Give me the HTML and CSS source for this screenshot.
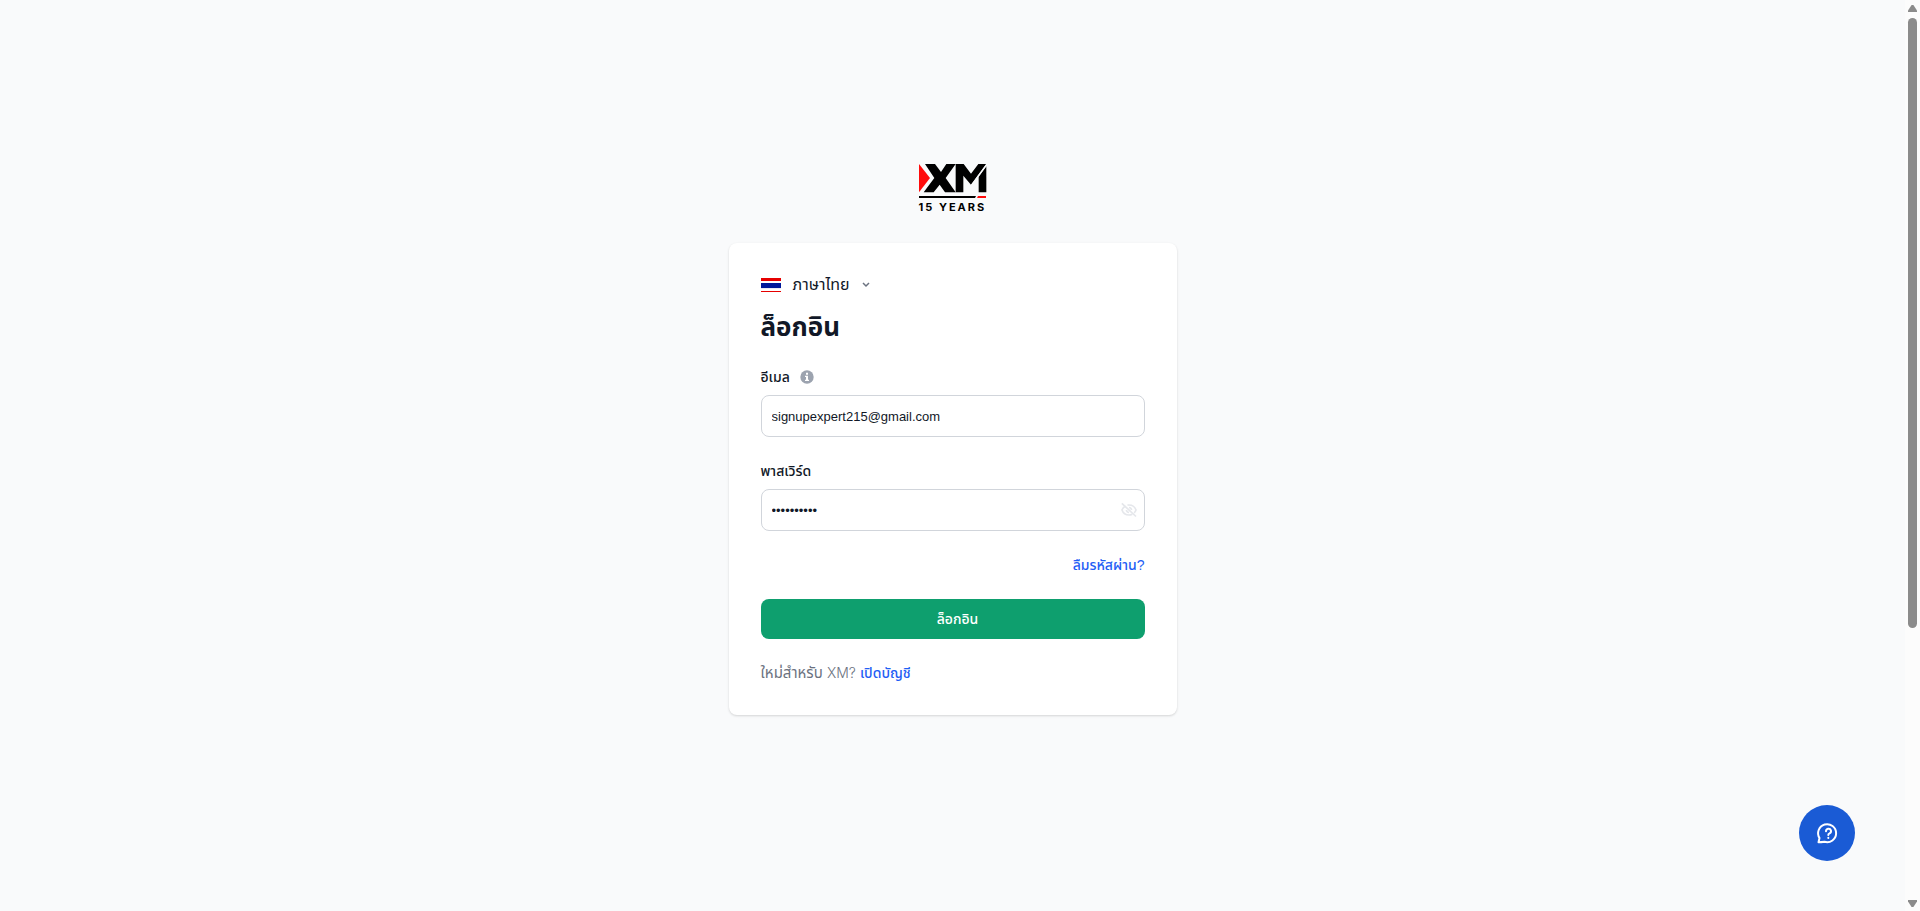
FILE: index.html
```html
<!DOCTYPE html>
<html lang="th">
<head>
  <meta charset="UTF-8">
  <meta name="viewport" content="width=device-width, initial-scale=1">
  <title>XM - ล็อกอิน</title>
  <link rel="stylesheet" href="styles.css">
</head>
<body>
  <main class="page">
    <div class="logo">
      <svg width="68" height="32" viewBox="0 0 204 96" aria-hidden="true">
        <path fill="#ff0b0b" d="M0 0L33 42L0 85Z"/>
        <path d="M18 0H48L66 24L82 0H110L80 42L110 85H78L62 62L44 85H14L46 42Z"/>
        <path d="M110 0H134L156 29L178 0H202L156 62L133 35V85H110Z"/>
        <path d="M179 38L202 7V85H179Z"/>
        <path stroke="#f9fafb" stroke-width="4" d="M156 66L204 0"/>
      </svg>
      <svg class="logo-line" width="68" height="2" viewBox="0 0 68 2" aria-hidden="true">
        <path d="M0 0H57L56 2H0Z"/>
        <path fill="#ff0b0b" d="M59 0H67V2H58Z"/>
      </svg>
      <span class="logo-text">15 YEARS</span>
    </div>

    <form class="card">
      <button type="button" class="language">
        <svg width="20" height="14" viewBox="0 0 20 14" aria-hidden="true">
          <path fill="#fff" d="M0 0h20v14H0z"/>
          <path fill="#e60000" d="M0 0h20v3H0zM0 13h20v1H0z"/>
          <path fill="#00189a" d="M0 5h20v5H0z"/>
          <path fill="#e9e9f5" d="M0 10h20v1H0z"/>
        </svg>
        <span>ภาษาไทย</span>
        <svg width="8" height="6" viewBox="0 0 8 6" fill="none" stroke="#6b7280" stroke-width="1.5" aria-hidden="true">
          <path d="M1 1l3 3 3-3"/>
        </svg>
      </button>

      <h1>ล็อกอิน</h1>

      <div class="field">
        <div class="field-label">
          <label for="email">อีเมล</label>
          <svg width="14" height="14" viewBox="0 0 14 14" aria-hidden="true">
            <circle cx="7" cy="7" r="6.7" fill="#9ca3af"/>
            <path fill="#fff" d="M6 2.7h2v2H6zM5 5.7h3v4h1V11H5V9.700h1V7H5z"/>
          </svg>
        </div>
        <input type="email" id="email" value="signupexpert215@gmail.com">
      </div>

      <div class="field">
        <div class="field-label">
          <label for="password">พาสเวิร์ด</label>
        </div>
        <div class="password">
          <input type="password" id="password" value="0123456789">
          <button type="button" class="toggle" aria-label="แสดงพาสเวิร์ด">
            <svg width="16" height="16" viewBox="0 0 16 16" fill="none" stroke="#e5e7eb" stroke-width="1.7">
              <path d="M4.500 4C2.800 4.900 1.500 6.400 1 8c1 2.900 3.800 5 7 5 1.200 0 2.300-.3 3.300-.8M6.500 3.200C7 3.100 7.500 3 8 3c3.200 0 6 2.100 7 5-.4 1.100-1 2.100-1.900 2.900"/>
              <path d="M8 5.500A2.500 2.500 0 0 1 10.500 8M5.500 8A2.500 2.500 0 0 0 8 10.500"/>
              <path d="M.8 1.300l14.200 13.200"/>
            </svg>
          </button>
        </div>
      </div>

      <a class="forgot" href="#">ลืมรหัสผ่าน?</a>
      <button type="submit" class="submit">ล็อกอิน</button>
      <p class="signup">ใหม่สำหรับ <span>XM?</span> <a href="#">เปิดบัญชี</a></p>
    </form>

    <button type="button" class="chat" aria-label="ช่วยเหลือ">
      <svg width="24" height="24" viewBox="0 0 24 24" fill="none" stroke="#fff" stroke-width="2" stroke-linecap="round" stroke-linejoin="round">
        <path d="M3.500 21.300l1-4.300A9 9 0 1 1 9.500 20.800c-2 .3-4 .5-6 .5z"/>
        <path d="M11 10.200a2.500 2.500 0 1 1 3.600 2.200c-.8.4-1.300.8-1.300 1.600"/>
        <path d="M13.300 16.800v.1"/>
      </svg>
    </button>
  </main>

  <div class="scrollbar" aria-hidden="true">
    <span class="arrow-up"></span>
    <span class="thumb"></span>
    <span class="arrow-down"></span>
  </div>
</body>
</html>
```
FILE: styles.css
```css
* {
  box-sizing: border-box;
}

body {
  display: flex;
  min-height: 100vh;
  margin: 0;
  background-color: #f9fafb;
  color: #111827;
  font-family: "Liberation Sans", "Noto Sans", "Noto Sans Thai", sans-serif;
  font-size: 14px;
  line-height: 20px;
}

button,
input {
  font: inherit;
  color: inherit;
}

button {
  border: none;
  padding: 0;
  background: none;
  cursor: pointer;
}

a {
  color: #1f5ef5;
  font-weight: 500;
  text-decoration: none;
}

svg {
  display: block;
  flex: none;
}

.page {
  flex: 1;
  display: flex;
  flex-direction: column;
  align-items: center;
  justify-content: center;
  padding-bottom: 32px;
}

.logo {
  width: 68px;
  margin-bottom: 30px;
}

.logo-text {
  display: block;
  color: #000;
  font-family: Inter, sans-serif;
  font-size: 11px;
  font-weight: 700;
  letter-spacing: 2px;
  line-height: 12px;
  margin-top: 3px;
  white-space: nowrap;
}

.card {
  display: flex;
  flex-direction: column;
  width: 100%;
  max-width: 448px;
  padding: 32px;
  background-color: #fff;
  border-radius: 8px;
  box-shadow: 0 1px 3px rgba(0, 0, 0, 0.1), 0 1px 2px rgba(0, 0, 0, 0.06);
}

.language {
  display: flex;
  align-items: center;
  align-self: flex-start;
  gap: 12px;
  height: 20px;
  font-size: 16px;
}

h1 {
  margin: 16px 0 24px;
  font-size: 26px;
  font-weight: 700;
  line-height: 32px;
}

.field {
  margin-bottom: 24px;
}

.field-label {
  display: flex;
  align-items: center;
  gap: 10px;
  height: 20px;
  margin-bottom: 8px;
  font-weight: 500;
}

input {
  display: block;
  width: 100%;
  height: 42px;
  padding: 0 10px;
  border: 1px solid #d1d5db;
  border-radius: 8px;
  background-color: #fff;
  font-size: 13px;
  outline: none;
}

.password {
  position: relative;
}

.toggle {
  position: absolute;
  top: 13px;
  right: 8px;
}

.forgot {
  align-self: flex-end;
  height: 20px;
  margin-bottom: 24px;
}

.submit {
  height: 40px;
  padding-left: 10px;
  border-radius: 8px;
  background-color: #0e9f6e;
  color: #fff;
  font-weight: 500;
}

.signup {
  height: 20px;
  margin: 24px 0 0;
  color: #6b7280;
  font-size: 15px;
}

.signup span,
.signup a {
  font-size: 14px;
}

.signup span {
  font-family: Inter, sans-serif;
  font-weight: 300;
}

.chat {
  position: fixed;
  right: 65px;
  bottom: 50px;
  display: flex;
  align-items: center;
  justify-content: center;
  width: 56px;
  height: 56px;
  border-radius: 50%;
  background-color: #1a5bd5;
}

.scrollbar {
  display: flex;
  flex-direction: column;
  align-items: center;
  width: 15px;
  padding: 5px 0 4px;
  background-color: #fcfcfc;
}

.arrow-up,
.arrow-down {
  width: 9px;
  height: 7px;
  background-color: #8b8b8b;
  clip-path: polygon(40% 0, 60% 0, 100% 80%, 100% 100%, 0 100%, 0 80%);
}

.arrow-down {
  margin-top: auto;
  transform: rotate(180deg);
}

.thumb {
  width: 9px;
  height: calc(68% - 3px);
  margin-top: 6px;
  border-radius: 5px;
  background-color: #8b8b8b;
}
```
